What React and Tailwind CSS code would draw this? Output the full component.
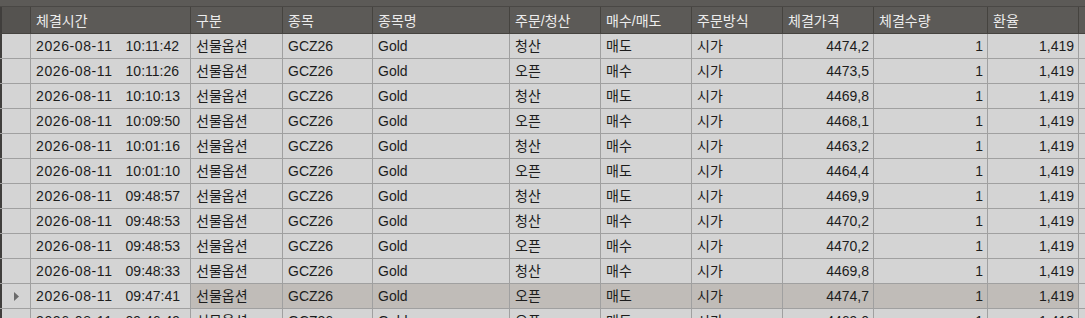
import React from 'react';

const columns = [
  { key: 'time', label: '체결시간', width: 'w-[160px]', align: 'left' },
  { key: 'kind', label: '구분', width: 'w-[92px]', align: 'left' },
  { key: 'code', label: '종목', width: 'w-[90px]', align: 'left' },
  { key: 'name', label: '종목명', width: 'w-[137px]', align: 'left' },
  { key: 'open', label: '주문/청산', width: 'w-[91px]', align: 'left' },
  { key: 'side', label: '매수/매도', width: 'w-[91px]', align: 'left' },
  { key: 'type', label: '주문방식', width: 'w-[91px]', align: 'left' },
  { key: 'price', label: '체결가격', width: 'w-[91px]', align: 'right' },
  { key: 'qty', label: '체결수량', width: 'w-[114px]', align: 'right' },
  { key: 'fx', label: '환율', width: 'w-[91px]', align: 'right' },
];

const fills = [
  ['10:11:42', '청산', '매도', '4474,2'],
  ['10:11:26', '오픈', '매수', '4473,5'],
  ['10:10:13', '청산', '매도', '4469,8'],
  ['10:09:50', '오픈', '매수', '4468,1'],
  ['10:01:16', '청산', '매수', '4463,2'],
  ['10:01:10', '오픈', '매도', '4464,4'],
  ['09:48:57', '청산', '매도', '4469,9'],
  ['09:48:53', '청산', '매수', '4470,2'],
  ['09:48:53', '오픈', '매수', '4470,2'],
  ['09:48:33', '청산', '매수', '4469,8'],
  ['09:47:41', '오픈', '매도', '4474,7'],
  ['09:46:49', '오픈', '매도', '4469,0'],
];

const rows = fills.map(([time, open, side, price]) => ({
  time,
  kind: '선물옵션',
  code: 'GCZ26',
  name: 'Gold',
  open,
  side,
  type: '시가',
  price,
  qty: '1',
  fx: '1,419',
}));

const SELECTED = 10;

const Cell = ({ col, row, selected }) => {
  const bg = selected && col.key !== 'time' ? 'bg-[#c0bcb8]' : 'bg-[#d4d4d4]';
  return (
    <div
      className={`${col.width} ${bg} shrink-0 h-full border-r border-[#a0a0a0] flex items-center overflow-hidden whitespace-pre ${
        col.align === 'right' ? 'justify-end pr-[4px]' : 'pl-[5px]'
      }`}
    >
      {col.key === 'time' ? (
        <>
          <span className="tracking-[0.6px]">2026-08-11</span>
          <span className="ml-[13px]">{row.time}</span>
        </>
      ) : (
        row[col.key]
      )}
    </div>
  );
};

export default function App() {
  return (
    <div
      className="w-[1085px] h-[318px] overflow-hidden bg-[#5c5a57] text-[14px] leading-none"
      style={{ fontFamily: '"Liberation Sans", "Noto Sans CJK KR", sans-serif' }}
    >
      <div className="h-[7px] border-b border-[#4a4845]" />

      {/* header */}
      <div className="flex h-[27px] border-b border-[#45433f] text-[#ececec]">
        <div className="w-[2px] shrink-0 bg-[#403e3c]" />
        <div className="w-[29px] shrink-0 bg-[#555350] border-r border-[#45433f]" />
        {columns.map((col) => (
          <div
            key={col.key}
            className={`${col.width} shrink-0 border-r border-[#45433f] flex items-center pl-[5px] pt-[1px]`}
          >
            {col.label}
          </div>
        ))}
        <div className="flex-1" />
      </div>

      {/* body */}
      {rows.map((row, i) => {
        const selected = i === SELECTED;
        return (
          <div key={i} className="flex h-[25px] border-b border-[#a0a0a0] text-[#1c1c1c]">
            <div className="w-[2px] shrink-0 bg-[#403e3c]" />
            <div className="w-[29px] shrink-0 bg-[#d4d4d4] border-r border-[#a0a0a0] flex items-center pl-[12px]">
              {selected && (
                <svg width="5" height="9" viewBox="0 0 5 9">
                  <path d="M0 0 L5 4.5 L0 9 Z" fill="#6b6b6b" />
                </svg>
              )}
            </div>
            {columns.map((col) => (
              <Cell key={col.key} col={col} row={row} selected={selected} />
            ))}
            <div className="flex-1 bg-[#d4d4d4]" />
          </div>
        );
      })}
    </div>
  );
}
